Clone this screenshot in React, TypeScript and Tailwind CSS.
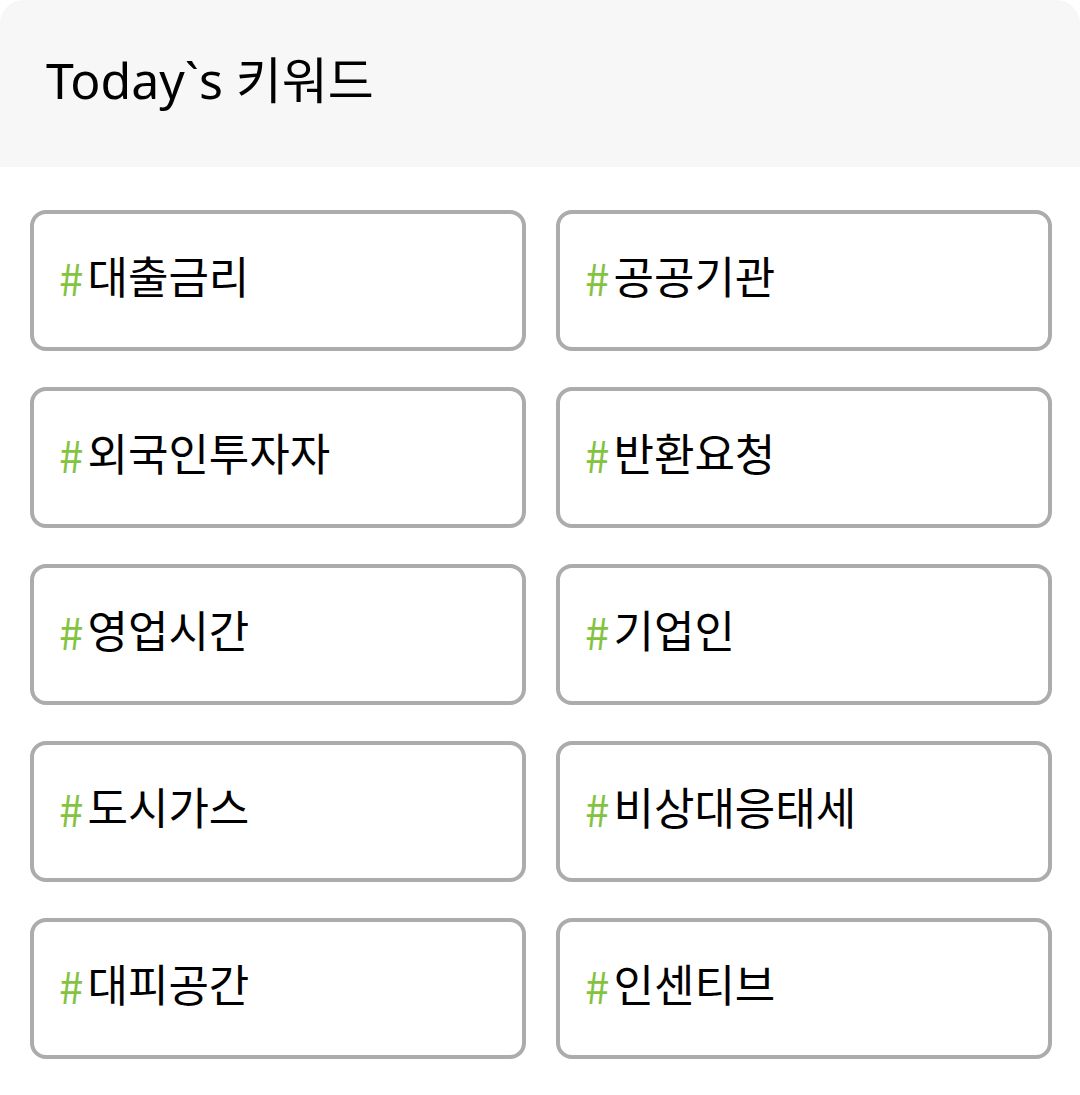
const keywords = ['대출금리', '공공기관', '외국인투자자', '반환요청', '영업시간', '기업인', '도시가스', '비상대응태세', '대피공간', '인센티브'];

export default function App() {
  return (
    <section className="min-h-screen bg-white font-['Noto_Sans_CJK_KR','Noto_Sans',sans-serif] text-black">
      <header className="rounded-t-3xl bg-[#f7f7f7] px-[46px] pt-11 pb-[51px]">
        <h1 className="font-['Noto_Sans','Noto_Sans_CJK_KR',sans-serif] text-[50px] leading-[72px]">Today`s 키워드</h1>
      </header>
      <ul className="grid grid-cols-2 gap-x-[30px] gap-y-9 pt-[43px] pr-7 pb-9 pl-[30px]">
        {keywords.map((keyword) => (
          <li key={keyword}>
            <a href="#" className="flex h-[141px] items-start gap-1 rounded-2xl border-4 border-[#acacac] px-[25px] pt-7 text-[44px] leading-[66px]">
              <span className="pt-0.5 text-[#84c341]">#</span>
              <span>{keyword}</span>
            </a>
          </li>
        ))}
      </ul>
    </section>
  );
}
